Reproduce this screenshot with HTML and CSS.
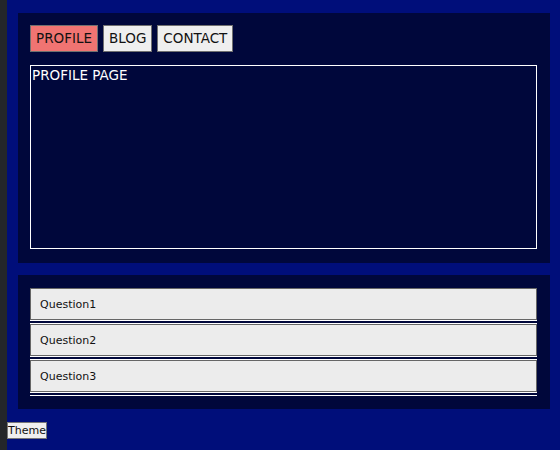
FILE: index.html
```html
<!DOCTYPE html>
<html>
<head>
<meta charset="utf-8">
<link rel="stylesheet" href="styles.css">
</head>
<body>
<div class="main">
  <section class="panel tabs-panel">
    <div class="tabs">
      <button class="tab active">PROFILE</button>
      <button class="tab">BLOG</button>
      <button class="tab">CONTACT</button>
    </div>
    <div class="tab-content">PROFILE PAGE</div>
  </section>
  <section class="panel faq-panel">
    <div class="item">
      <button class="question">Question1</button>
      <div class="answer"></div>
    </div>
    <div class="item">
      <button class="question">Question2</button>
      <div class="answer"></div>
    </div>
    <div class="item">
      <button class="question">Question3</button>
      <div class="answer"></div>
    </div>
  </section>
</div>
<button class="theme">Theme</button>
</body>
</html>
```
FILE: styles.css
```css
html {
  background: #000e7a;
}
body {
  margin: 0;
  min-height: 100vh;
  box-sizing: border-box;
  border-left: 7px solid #24262a;
  background: #000e7a;
  padding-top: 13px;
  font-family: "DejaVu Sans", sans-serif;
}
.main {
  display: flex;
  flex-direction: column;
  gap: 12px;
  margin: 0 10px 0 11px;
}
.panel {
  background: #00073b;
}
.tabs-panel {
  padding: 12px 13px 14px 12px;
}
.tabs {
  display: flex;
  gap: 5px;
}
.tab {
  font-family: "DejaVu Sans", sans-serif;
  font-size: 13.5px;
  line-height: 15px;
  padding: 5px 5px;
  border: 1px solid #707070;
  background: #efefef;
  color: #111;
  border-radius: 0;
  margin: 0;
}
.tab.active {
  background: #f07472;
}
.tab-content {
  margin-top: 13px;
  height: 181px;
  border: 1px solid #fff;
  color: #fff;
  font-size: 13.5px;
  line-height: 17px;
  padding: 1px 1px 0;
}
.faq-panel {
  padding: 13px 13px 13px 12px;
}
.item {
  display: flex;
  flex-direction: column;
}
.question {
  height: 32px;
  text-align: left;
  padding: 1px 9px 0;
  border: 1px solid #666;
  background: #ececec;
  color: #111;
  font-family: "DejaVu Sans", sans-serif;
  font-size: 11px;
  border-radius: 0;
  margin: 0;
}
.answer {
  height: 2px;
  border-top: 1px solid #fff;
  border-bottom: 1px solid #fff;
}
.theme {
  display: block;
  margin-top: 13px;
  padding: 0;
  height: 17px;
  border: 1px solid #777;
  background: #efefef;
  color: #111;
  font-family: "DejaVu Sans", sans-serif;
  font-size: 11px;
  line-height: 15px;
  border-radius: 0;
}
```
